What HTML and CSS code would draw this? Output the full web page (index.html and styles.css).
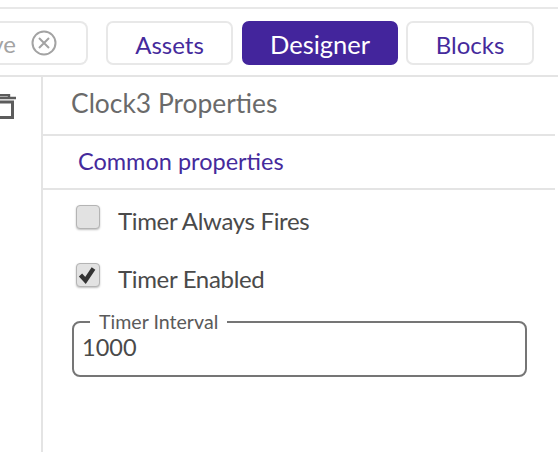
FILE: index.html
```html
<!DOCTYPE html>
<html lang="en">
<head>
    <meta charset="UTF-8">
    <title>Designer</title>
    <link rel="stylesheet" href="styles.css">
</head>
<body>

    <div class="toolbar">
        <div class="search-box">
            <span class="search-text">Remove</span>
            <svg class="clear-icon" width="26" height="26" viewBox="0 0 26 26">
                <circle cx="13" cy="13" r="11.5" fill="none" stroke="#a3a3a3" stroke-width="2"/>
                <path d="M8 8 L18 18 M18 8 L8 18" stroke="#a3a3a3" stroke-width="2" fill="none"/>
            </svg>
        </div>
        <button class="tab tab-assets">Assets</button>
        <button class="tab tab-designer active">Designer</button>
        <button class="tab tab-blocks">Blocks</button>
    </div>

    <div class="main">
        <div class="side">
            <svg class="trash-icon" width="30" height="26" viewBox="0 0 30 26">
                <path d="M0 4 H28 M9 3.5 V1 H21 V3.5" stroke="#5c5c5c" stroke-width="2.4" fill="none"/>
                <path d="M6 8 H24.5 V23.5 H6 Z" stroke="#5c5c5c" stroke-width="3" fill="none"/>
            </svg>
        </div>
        <div class="props">
            <div class="props-title">Clock3 Properties</div>
            <div class="props-section">Common properties</div>
            <div class="props-body">
                <div class="check-row">
                    <span class="checkbox"></span>
                    <span class="check-label">Timer Always Fires</span>
                </div>
                <div class="check-row">
                    <span class="checkbox">
                        <svg width="24" height="24" viewBox="0 0 24 24">
                            <path d="M4.5 12 L9.5 17.5 L17.5 5.5" stroke="#333" stroke-width="4.4" fill="none"/>
                        </svg>
                    </span>
                    <span class="check-label">Timer Enabled</span>
                </div>
                <fieldset class="field">
                    <legend>Timer Interval</legend>
                    <div class="field-value">1000</div>
                </fieldset>
            </div>
        </div>
    </div>

</body>
</html>
```

FILE: styles.css
```css
body {
    margin: 0;
    width: 558px;
    height: 452px;
    overflow: hidden;
    background-color: #fff;
    font-family: 'Lato', sans-serif;
    color: #4a4a4a;
}

.toolbar {
    display: flex;
    align-items: center;
    height: 70px;
    margin-top: 7px;
    border-top: 2px solid #e8e8e8;
    border-bottom: 2px solid #e4e4e4;
    box-sizing: border-box;
    padding-top: 2px;
}

.search-box {
    display: flex;
    align-items: center;
    justify-content: flex-end;
    gap: 15px;
    width: 88px;
    height: 44px;
    box-sizing: border-box;
    padding-right: 29px;
    margin-right: 18px;
    border: 2px solid #e8e8e8;
    border-left: none;
    border-radius: 0 8px 8px 0;
    overflow: hidden;
    white-space: nowrap;
}

.search-text {
    font-size: 24px;
    color: #a3a3a3;
}

.clear-icon {
    flex-shrink: 0;
}

.tab {
    height: 44px;
    box-sizing: border-box;
    padding: 2px 0 0;
    background-color: #fff;
    border: 2px solid #e8e8e8;
    border-radius: 7px;
    font-family: 'Lato', sans-serif;
    font-size: 24px;
    color: #452a9c;
}

.tab-assets {
    width: 127px;
    margin-right: 9px;
}

.tab-designer {
    width: 156px;
    margin-right: 8px;
    font-size: 25.5px;
}

.tab-blocks {
    width: 128px;
}

.tab.active {
    background-color: #43259c;
    border-color: #43259c;
    color: #fff;
}

.main {
    display: flex;
    height: 375px;
}

.side {
    width: 43px;
    box-sizing: border-box;
    border-right: 2px solid #e4e4e4;
    overflow: hidden;
    flex-shrink: 0;
}

.trash-icon {
    display: block;
    margin: 17px 0 0 -12px;
}

.props {
    width: 512px;
}

.props-title {
    height: 59px;
    box-sizing: border-box;
    padding: 10px 0 0 28px;
    border-bottom: 2px solid #e4e4e4;
    font-size: 26.4px;
    color: #6a6a6a;
}

.props-section {
    height: 54px;
    box-sizing: border-box;
    padding: 11px 0 0 35px;
    border-bottom: 2px solid #e4e4e4;
    font-size: 23.5px;
    color: #452a9c;
}

.props-body {
    padding-left: 29px;
}

.check-row {
    display: flex;
    align-items: flex-start;
    height: 58px;
    box-sizing: border-box;
    padding-top: 15px;
}

.checkbox {
    width: 24px;
    height: 24px;
    box-sizing: border-box;
    margin: 0 18px 0 4px;
    background-color: #e2e2e2;
    border: 1px solid #b4b4b4;
    border-radius: 4px;
    box-shadow: 0 1px 2px rgba(0, 0, 0, 0.25);
}

.checkbox svg {
    display: block;
    margin: -1px;
}

.check-label {
    font-size: 24px;
    letter-spacing: -0.33px;
    line-height: 30px;
    margin-top: 1px;
    color: #4a4a4a;
}

.field {
    width: 455px;
    height: 65px;
    box-sizing: border-box;
    margin: 6px 0 0 0;
    padding: 0 0 0 8px;
    border: 2px solid #757575;
    border-radius: 8px;
}

.field legend {
    margin-left: 8px;
    padding: 0 9px;
    font-size: 19.6px;
    line-height: 20px;
    color: #5a5a5a;
}

.field-value {
    font-size: 23.5px;
    line-height: 30px;
    color: #4a4a4a;
}
```
